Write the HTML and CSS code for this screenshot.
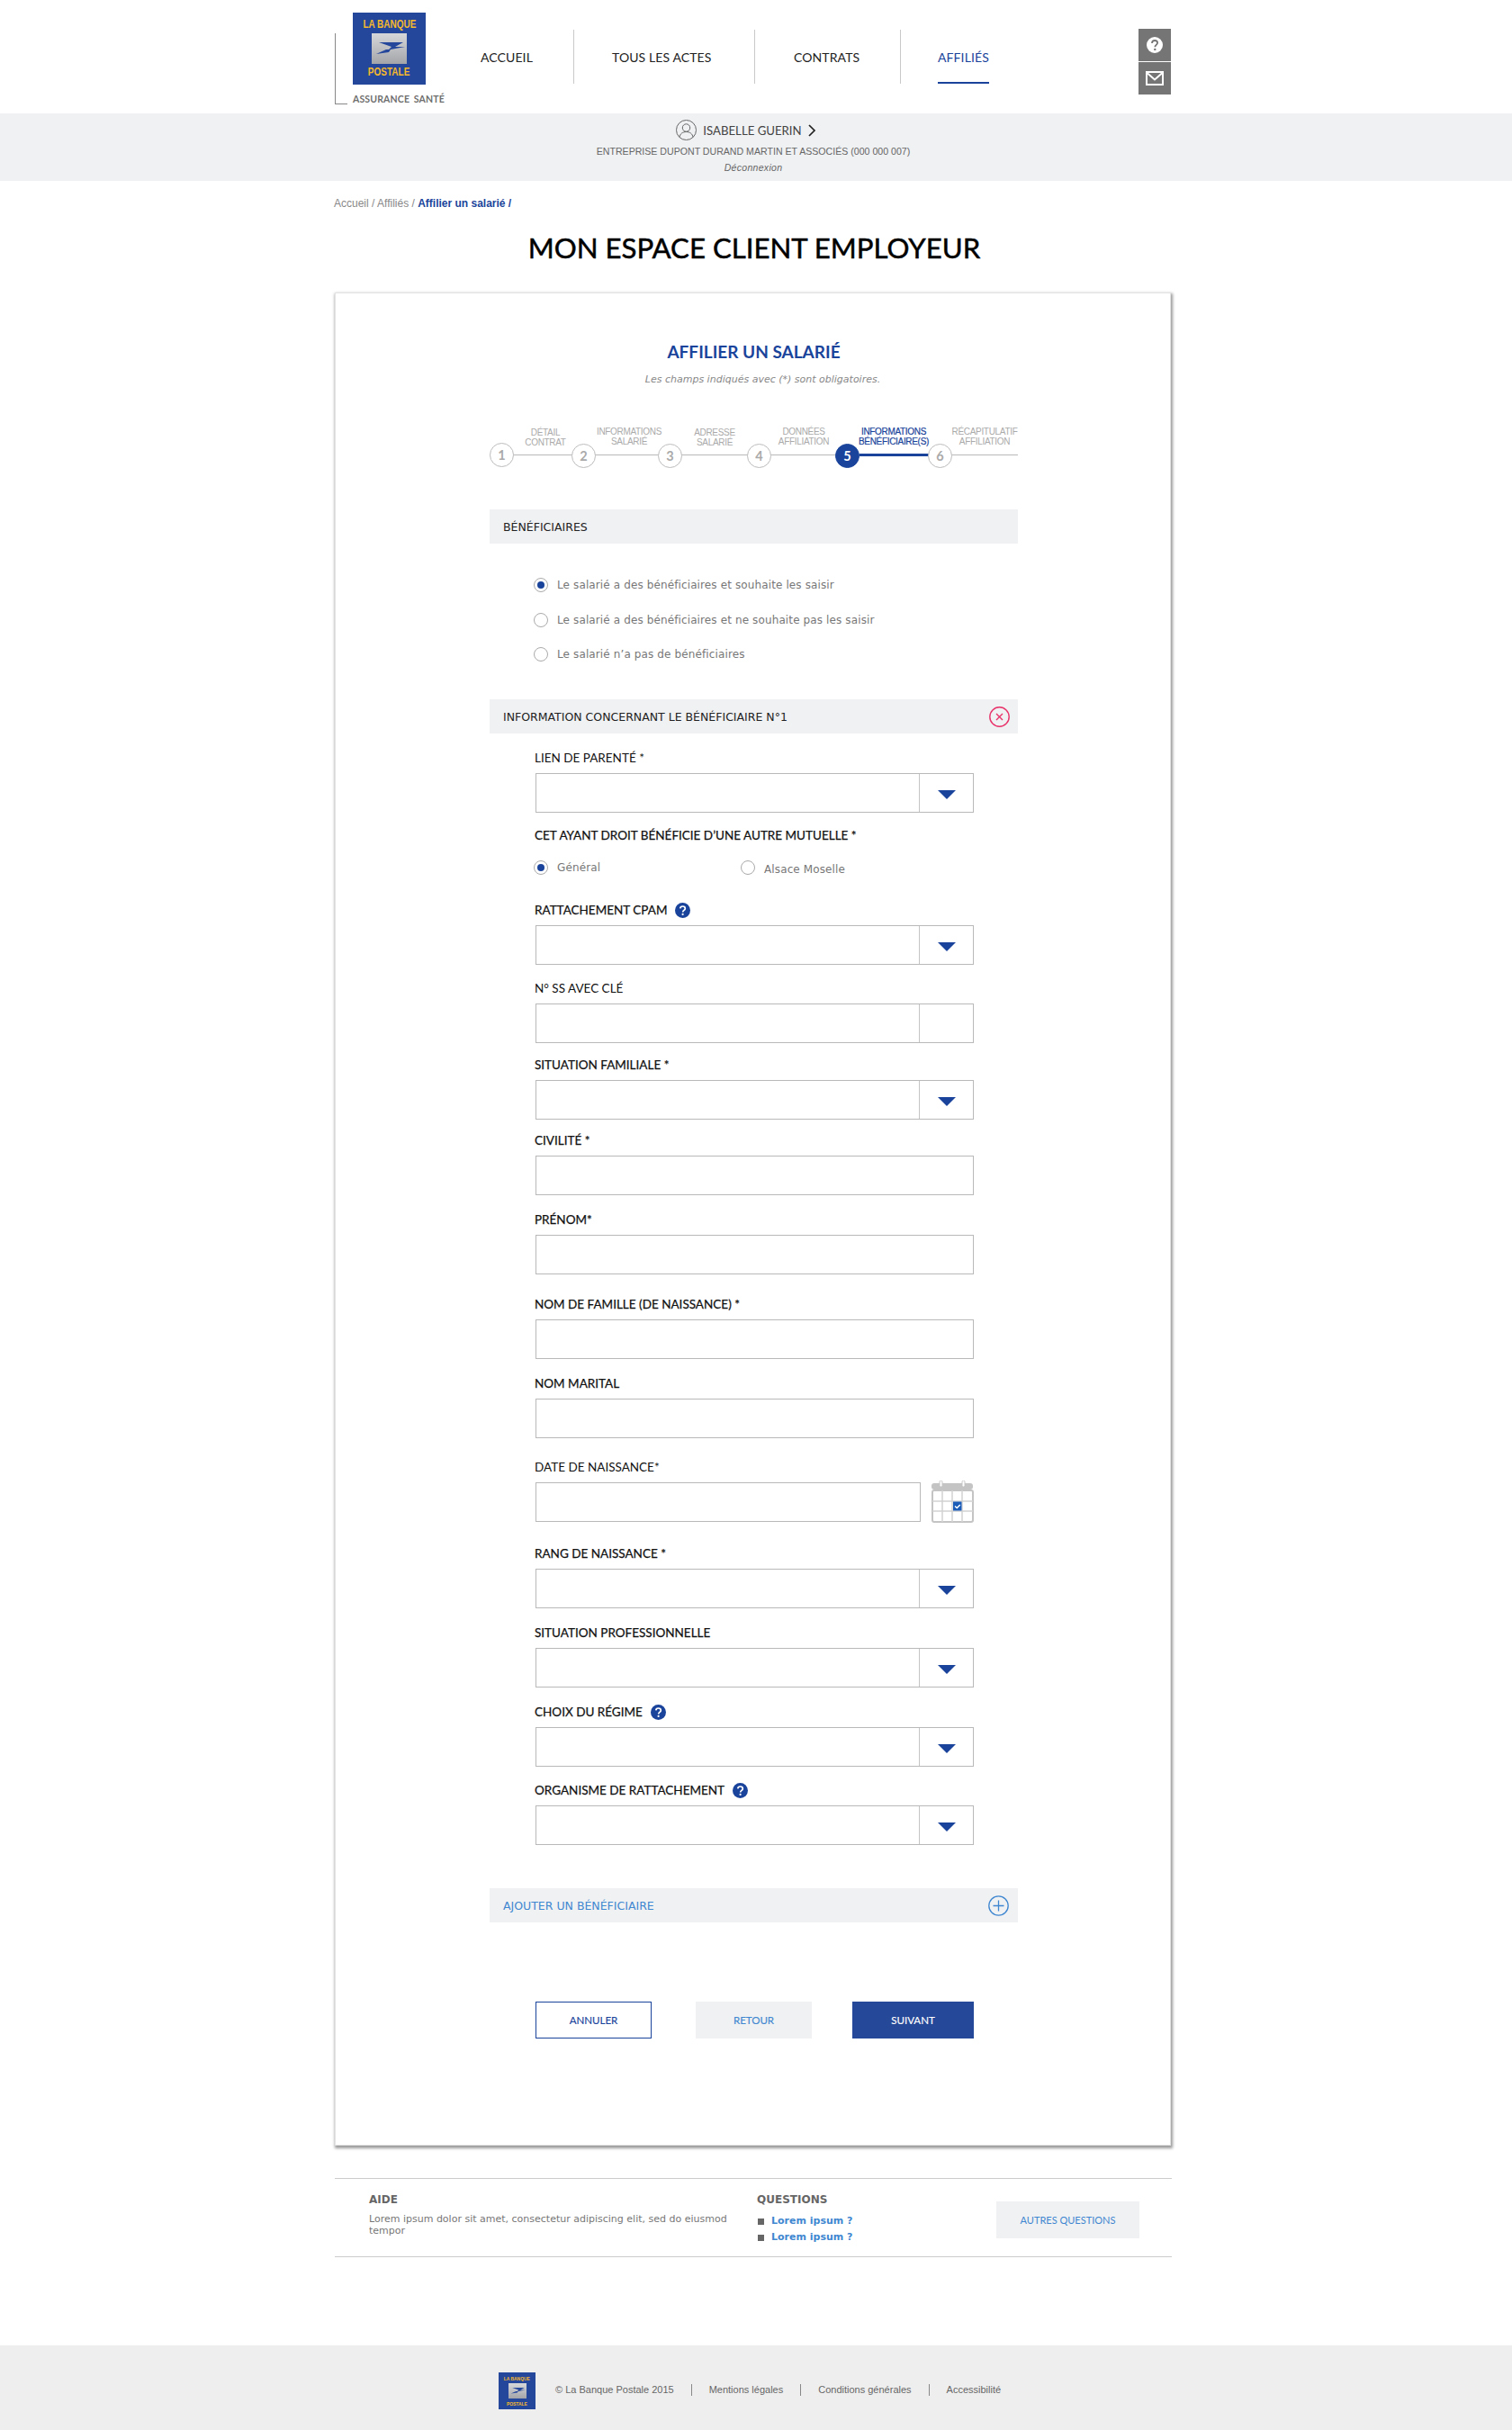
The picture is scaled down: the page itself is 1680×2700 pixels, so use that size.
FILE: index.html
```html
<!DOCTYPE html>
<html lang="fr">
<head>
<meta charset="utf-8">
<title>Mon espace client employeur</title>
<link rel="stylesheet" href="styles.css">
</head>
<body>
<svg class="defs" width="0" height="0" aria-hidden="true">
  <defs>
    <symbol id="caret" viewBox="0 0 20 10"><path d="M0 0H20L10 10Z" fill="#1a449b"/></symbol>
    <symbol id="help" viewBox="0 0 17 17"><circle cx="8.5" cy="8.5" r="8.5" fill="#1a449b"/><path d="M5.8 6.4C5.9 4.8 7 4 8.5 4c1.6 0 2.8 1 2.8 2.4 0 2-2.6 2-2.6 4" fill="none" stroke="#fff" stroke-width="1.7"/><circle cx="8.6" cy="12.9" r="1.1" fill="#fff"/></symbol>
    <symbol id="swoosh" viewBox="0 0 39 34"><path d="M8 10H35L26 15H37L21 18 19 21 5 23 16 18H19L22 15Z" fill="#25479b"/></symbol>
  </defs>
</svg>

<header class="top wrap">
  <div class="brand">
    <div class="logo">
      <span class="logo-word">LA BANQUE</span>
      <span class="logo-mark"><svg><use href="#swoosh"/></svg></span>
      <span class="logo-word">POSTALE</span>
    </div>
    <span class="brand-sub">ASSURANCE SANTÉ</span>
  </div>
  <nav class="nav">
    <a class="nav-item nav-accueil">ACCUEIL</a>
    <a class="nav-item nav-actes">TOUS LES ACTES</a>
    <a class="nav-item nav-contrats">CONTRATS</a>
    <a class="nav-item nav-affilies is-active"><span>AFFILIÉS</span></a>
  </nav>
  <div class="quick">
    <a class="quick-btn"><svg width="18" height="18" viewBox="0 0 18 18"><circle cx="9" cy="9" r="9" fill="#fff"/><path d="M6 7C6 5 7.4 4 9.1 4c1.8 0 3 1.1 3 2.6 0 2.2-2.8 2.3-2.800 4.600" fill="none" stroke="#757575" stroke-width="1.8"/><circle cx="9.300" cy="13.900" r="1.200" fill="#757575"/></svg></a>
    <a class="quick-btn"><svg width="20" height="16" viewBox="0 0 20 16"><rect x="1" y="1" width="18" height="14" fill="none" stroke="#fff" stroke-width="2"/><path d="M1.500 2 10 9.500 18.500 2" fill="none" stroke="#fff" stroke-width="2"/></svg></a>
  </div>
</header>

<section class="user-band">
  <div class="user-line">
    <svg width="23" height="23" viewBox="0 0 23 23"><circle cx="11.500" cy="11.500" r="11" fill="none" stroke="#666"/><circle cx="11.500" cy="9" r="4.200" fill="none" stroke="#666"/><path d="M4 19.500c.6-4 3.500-6 7.500-6s6.900 2 7.500 6" fill="none" stroke="#666"/></svg>
    <span class="user-name">ISABELLE GUERIN</span>
    <svg width="9" height="14" viewBox="0 0 9 14"><path d="M1 1l6 6-6 6" fill="none" stroke="#222" stroke-width="1.700"/></svg>
  </div>
  <p class="user-company">ENTREPRISE DUPONT DURAND MARTIN ET ASSOCIÉS (000 000 007)</p>
  <p class="user-logout">Déconnexion</p>
</section>

<main class="wrap">
  <p class="crumbs">Accueil / Affiliés / <strong>Affilier un salarié /</strong></p>
  <h1 class="page-title">MON ESPACE CLIENT EMPLOYEUR</h1>

  <article class="card">
    <h2 class="card-title">AFFILIER UN SALARIÉ</h2>
    <p class="card-note">Les champs indiqués avec (*) sont obligatoires.</p>

    <ol class="steps">
      <li class="step step-1"><span class="step-label">DÉTAIL<br>CONTRAT</span><b class="step-dot">1</b></li>
      <li class="step step-2"><span class="step-label">INFORMATIONS<br>SALARIÉ</span><b class="step-dot">2</b></li>
      <li class="step step-3"><span class="step-label">ADRESSE<br>SALARIÉ</span><b class="step-dot">3</b></li>
      <li class="step step-4"><span class="step-label">DONNÉES<br>AFFILIATION</span><b class="step-dot">4</b></li>
      <li class="step step-5 is-current"><span class="step-label">INFORMATIONS<br>BÉNÉFICIAIRE(S)</span><b class="step-dot">5</b></li>
      <li class="step step-6"><span class="step-label">RÉCAPITULATIF<br>AFFILIATION</span><b class="step-dot">6</b></li>
    </ol>

    <div class="bar bar-first"><span>BÉNÉFICIAIRES</span></div>

    <div class="choices">
      <label class="radio is-on"><i></i>Le salarié a des bénéficiaires et souhaite les saisir</label>
      <label class="radio"><i></i>Le salarié a des bénéficiaires et ne souhaite pas les saisir</label>
      <label class="radio"><i></i>Le salarié n’a pas de bénéficiaires</label>
    </div>

    <div class="bar bar-info">
      <span>INFORMATION CONCERNANT LE BÉNÉFICIAIRE N°1</span>
      <svg width="23" height="23" viewBox="0 0 23 23"><circle cx="11.500" cy="11.500" r="10.700" fill="none" stroke="#e8336b" stroke-width="1.400"/><path d="M8 8l7 7M15 8l-7 7" stroke="#e8336b" stroke-width="1.400"/></svg>
    </div>

    <div class="form">
      <div class="field f-first">
        <label class="lbl">LIEN DE PARENTÉ *</label>
        <div class="input has-side"><span class="side"><svg class="caret"><use href="#caret"/></svg></span></div>
      </div>
      <div class="mutuelle">
        <p class="lbl lbl-strong">CET AYANT DROIT BÉNÉFICIE D’UNE AUTRE MUTUELLE *</p>
        <div class="radio-row">
          <label class="radio is-on"><i></i>Général</label>
          <label class="radio radio-low"><i></i><span>Alsace Moselle</span></label>
        </div>
      </div>
      <div class="field f-cpam">
        <label class="lbl lbl-strong">RATTACHEMENT CPAM <svg class="help"><use href="#help"/></svg></label>
        <div class="input has-side"><span class="side"><svg class="caret"><use href="#caret"/></svg></span></div>
      </div>
      <div class="field f-17">
        <label class="lbl">N° SS AVEC CLÉ</label>
        <div class="input has-side"><span class="side"></span></div>
      </div>
      <div class="field f-15">
        <label class="lbl lbl-strong">SITUATION FAMILIALE *</label>
        <div class="input has-side"><span class="side"><svg class="caret"><use href="#caret"/></svg></span></div>
      </div>
      <div class="field f-14">
        <label class="lbl lbl-strong">CIVILITÉ *</label>
        <div class="input"></div>
      </div>
      <div class="field f-18">
        <label class="lbl lbl-strong">PRÉNOM*</label>
        <div class="input"></div>
      </div>
      <div class="field f-24">
        <label class="lbl lbl-strong">NOM DE FAMILLE (DE NAISSANCE) *</label>
        <div class="input"></div>
      </div>
      <div class="field f-18">
        <label class="lbl lbl-strong">NOM MARITAL</label>
        <div class="input"></div>
      </div>
      <div class="field f-23">
        <label class="lbl">DATE DE NAISSANCE*</label>
        <div class="date-row">
          <div class="input"></div>
          <svg class="calendar" viewBox="0 0 47 47" role="img" aria-label="Calendrier">
            <rect x="0" y="3" width="46" height="7" rx="3" fill="#c4c4c4"/>
            <rect x="9" y="0" width="3" height="7" rx="1.500" fill="#fff" stroke="#c4c4c4"/>
            <rect x="34" y="0" width="3" height="7" rx="1.500" fill="#fff" stroke="#c4c4c4"/>
            <rect x="1" y="11" width="45" height="35" rx="2" fill="#fff" stroke="#c4c4c4" stroke-width="2"/>
            <path d="M12 11V46M23 11V46M34 11V46M1 23H46M1 34H46" stroke="#d2d2d2" stroke-width="1.500"/>
            <rect x="24" y="23.500" width="9.500" height="10" fill="#1a5cb8"/>
            <path d="M26 28.500l2.300 2 3.500-3.500" fill="none" stroke="#fff" stroke-width="1.500"/>
          </svg>
        </div>
      </div>
      <div class="field f-26">
        <label class="lbl lbl-strong">RANG DE NAISSANCE *</label>
        <div class="input has-side"><span class="side"><svg class="caret"><use href="#caret"/></svg></span></div>
      </div>
      <div class="field f-18">
        <label class="lbl lbl-strong">SITUATION PROFESSIONNELLE</label>
        <div class="input has-side"><span class="side"><svg class="caret"><use href="#caret"/></svg></span></div>
      </div>
      <div class="field f-18">
        <label class="lbl lbl-strong">CHOIX DU RÉGIME <svg class="help"><use href="#help"/></svg></label>
        <div class="input has-side"><span class="side"><svg class="caret"><use href="#caret"/></svg></span></div>
      </div>
      <div class="field f-17">
        <label class="lbl lbl-strong">ORGANISME DE RATTACHEMENT <svg class="help"><use href="#help"/></svg></label>
        <div class="input has-side"><span class="side"><svg class="caret"><use href="#caret"/></svg></span></div>
      </div>
    </div>

    <div class="bar bar-add">
      <span>AJOUTER UN BÉNÉFICIAIRE</span>
      <svg width="23" height="23" viewBox="0 0 23 23"><circle cx="11.500" cy="11.500" r="10.700" fill="none" stroke="#3f87d0" stroke-width="1.300"/><path d="M11.500 5.500v12M5.500 11.500h12" stroke="#3f87d0" stroke-width="1.300"/></svg>
    </div>

    <div class="actions">
      <a class="btn btn-outline">ANNULER</a>
      <a class="btn btn-grey">RETOUR</a>
      <a class="btn btn-solid">SUIVANT</a>
    </div>
  </article>

  <section class="help-box">
    <div class="help-aide">
      <h3>AIDE</h3>
      <p>Lorem ipsum dolor sit amet, consectetur adipiscing elit, sed do eiusmod tempor</p>
    </div>
    <div class="help-q">
      <h3>QUESTIONS</h3>
      <ul>
        <li>Lorem ipsum ?</li>
        <li>Lorem ipsum ?</li>
      </ul>
    </div>
    <a class="help-more">AUTRES QUESTIONS</a>
  </section>
</main>

<footer class="foot">
  <div class="logo logo-small">
    <span class="logo-word">LA BANQUE</span>
    <span class="logo-mark"><svg><use href="#swoosh"/></svg></span>
    <span class="logo-word">POSTALE</span>
  </div>
  <span class="foot-item foot-copy">© La Banque Postale 2015</span>
  <span class="foot-item">Mentions légales</span>
  <span class="foot-item">Conditions générales</span>
  <span class="foot-item">Accessibilité</span>
</footer>
</body>
</html>
```

FILE: styles.css
```css
* { box-sizing: border-box; }
html, body { margin: 0; padding: 0; }
body { background: #fff; color: #222; font-family: "Lato", "Liberation Sans", sans-serif; }
p, h1, h2, h3, ul, ol { margin: 0; padding: 0; list-style: none; }
.defs { position: absolute; }
.wrap { margin-left: 372px; width: 930px; }

/* logo */
.logo { width: 81px; height: 80px; background: #25479b; display: flex; flex-direction: column; align-items: center; padding-top: 8px; }
.logo-word { font: bold 12.500px/11px "Liberation Sans", sans-serif; color: #f6b92b; white-space: nowrap; transform: scaleX(.8); }
.logo-mark { display: block; width: 39px; height: 34px; margin: 4px 0; background: linear-gradient(#d6d7d9, #a3a5a9); }
.logo-mark svg { display: block; width: 100%; height: 100%; }
.logo-small { flex: none; width: 41px; height: 41px; padding-top: 4px; }
.logo-small .logo-word { font-size: 6.200px; line-height: 6px; }
.logo-small .logo-mark { width: 20px; height: 17px; margin: 2px 0 3px; }

/* header */
.top { height: 126px; display: flex; }
.brand { width: 162px; height: 116px; padding-left: 20px; padding-top: 14px; position: relative; }
.brand::before { content: ""; position: absolute; left: 0; top: 37px; width: 13px; height: 78px; border-left: 1px solid #888; border-bottom: 1px solid #888; }
.brand-sub { display: block; margin-top: 10px; font: bold 10.500px/13px "Lato", sans-serif; color: #6f6f6f; white-space: nowrap; letter-spacing: .15px; word-spacing: 2px; }
.nav { display: flex; height: 60px; margin-top: 33px; }
.nav-item { display: flex; align-items: center; height: 60px; font-size: 14px; letter-spacing: .1px; color: #222; white-space: nowrap; border-right: 1px solid #c9c9c9; }
.nav-accueil { width: 104px; }
.nav-actes { width: 201px; padding-left: 42px; }
.nav-contrats { width: 162px; padding-left: 43px; }
.nav-affilies { width: 141px; border-right: 0; padding-left: 41px; color: #1a449b; }
.nav-affilies span { height: 60px; line-height: 61px; border-bottom: 2px solid #1a449b; }
.quick { margin-left: auto; margin-right: 1px; margin-top: 32px; display: flex; flex-direction: column; gap: 1px; }
.quick-btn { width: 36px; height: 36px; background: #757575; display: flex; align-items: center; justify-content: center; }

/* user band */
.user-band { height: 75px; background: #f0f1f3; display: flex; flex-direction: column; align-items: center; padding: 7px 6px 0 0; }
.user-line { display: flex; align-items: center; gap: 7px; height: 23px; margin-left: -16px; }
.user-name { font-size: 13.200px; color: #444; }
.user-company { margin-top: 4px; font: 10.600px/16px "Liberation Sans", sans-serif; color: #666; }
.user-logout { margin-top: 3px; font: italic 10.500px/14px "Liberation Sans", sans-serif; color: #666; letter-spacing: .3px; }

/* titles */
.crumbs { height: 14px; margin-top: 18px; margin-left: -1px; font: 12px/14px "Liberation Sans", sans-serif; color: #888; }
.crumbs strong { color: #1a449b; }
.page-title { margin-top: 22px; height: 40px; font-size: 31.200px; line-height: 40px; font-weight: 400; color: #000; text-align: center; width: 932px; -webkit-text-stroke: .5px #000; }

/* card */
.card { margin-top: 30px; width: 929px; height: 2059px; background: #fff; border: 1px solid #e3e3e3; box-shadow: 1px 2px 3px 1px rgba(0, 0, 0, .4); padding-left: 171px; padding-top: 53px; }
.card-title { width: 587px; text-align: center; font-size: 19px; line-height: 24px; color: #1a449b; font-weight: 700; }
.card-note { width: 587px; margin-top: 12px; padding-left: 20px; text-align: center; font: italic 11px/14px "DejaVu Sans", sans-serif; color: #888; }

/* stepper */
.steps { position: relative; width: 587px; height: 50px; margin-top: 37px; }
.steps::before { content: ""; position: absolute; left: 0; right: 0; top: 39px; height: 1px; background: #b9b9b9; }
.step { position: absolute; top: 0; width: 100px; }
.step-label { position: absolute; top: 8px; left: 0; width: 100px; text-align: center; font: 10px/11px "Liberation Sans", sans-serif; color: #aaa; letter-spacing: -.32px; white-space: nowrap; }
.step-dot { position: absolute; top: 27px; width: 27px; height: 27px; border-radius: 50%; border: 1px solid #bcbcbc; background: #fff; color: #aaa; font: bold 14.500px/25px "Lato", sans-serif; text-align: center; }
.step-1 { left: 11px; }  .step-1 .step-dot { left: -11px; top: 26px; } .step-1 .step-label { left: 1px; top: 9px; }
.step-2 { left: 105px; } .step-2 .step-dot { left: -14px; }
.step-3 { left: 200px; } .step-3 .step-dot { left: -13px; } .step-3 .step-label { top: 9px; }
.step-4 { left: 299px; } .step-4 .step-dot { left: -13px; }
.step-5 { left: 398px; } .step-5 .step-dot { left: -14px; background: #1a449b; border-color: #1a449b; color: #fff; } .step-5 .step-label { left: 1px; color: #1a449b; -webkit-text-stroke: .2px #1a449b; }
.step-5::after { content: ""; position: absolute; left: 13px; top: 38px; width: 85px; height: 3px; background: #1a449b; }
.step-6 { left: 500px; } .step-6 .step-dot { left: -13px; }

/* bars */
.bar { width: 587px; height: 38px; background: #f0f1f3; display: flex; align-items: center; justify-content: space-between; padding: 0 9px 0 15px; font: 12.500px/38px "DejaVu Sans", sans-serif; color: #222; }
.bar span { padding-top: 2px; }
.bar-first { margin-top: 50px; }
.bar-info { margin-top: 41px; }
.bar-add { margin-top: 48px; color: #3f87d0; padding-right: 10px; }

/* radios */
.choices { margin-top: 37px; padding-left: 49px; display: flex; flex-direction: column; gap: 20.500px; }
.radio { display: flex; align-items: center; gap: 10px; height: 18px; font: 12px/18px "DejaVu Sans", sans-serif; color: #777; white-space: nowrap; letter-spacing: .12px; }
.radio i { width: 16px; height: 16px; border-radius: 50%; border: 1px solid #aaa; background: #fff; flex: none; display: flex; align-items: center; justify-content: center; }
.radio.is-on i::after { content: ""; width: 8px; height: 8px; border-radius: 50%; background: #1a449b; }
.radio-low span { padding-top: 4px; }

/* form */
.form { padding-left: 51px; width: 587px; }
.lbl { display: flex; align-items: center; height: 18px; margin-bottom: 8px; margin-left: -1px; font-size: 13.500px; line-height: 18px; color: #111; white-space: nowrap; }
.lbl-strong { -webkit-text-stroke: .25px #111; }
.help { width: 17px; height: 17px; margin-left: 9px; }
.input { width: 487px; height: 44px; border: 1px solid #b9b9b9; background: #fff; position: relative; flex: none; }
.has-side .side { position: absolute; right: 0; top: 0; bottom: 0; width: 60px; border-left: 1px solid #c4c4c4; display: flex; align-items: center; justify-content: center; padding-top: 3px; }
.caret { width: 20px; height: 10px; }
.field { width: 487px; }
.f-first { margin-top: 18px; }
.f-14 { margin-top: 14px; }
.f-15 { margin-top: 15px; }
.f-17 { margin-top: 17px; }
.f-18 { margin-top: 18px; }
.f-23 { margin-top: 23px; }
.f-24 { margin-top: 24px; }
.f-26 { margin-top: 26px; }
.mutuelle { height: 99px; padding-top: 16px; }
.mutuelle .lbl { margin-bottom: 0; }
.radio-row { display: flex; margin-top: 18px; margin-left: -2px; }
.radio-row .radio:first-child { width: 230px; }
.date-row { display: flex; align-items: flex-start; justify-content: space-between; height: 44px; }
.date-row .input { width: 428px; }
.calendar { width: 47px; height: 47px; margin-top: -2px; flex: none; }

/* actions */
.actions { margin-top: 88px; padding-left: 51px; display: flex; width: 587px; }
.btn { height: 41px; display: flex; align-items: center; justify-content: center; font-size: 11.500px; -webkit-text-stroke: .15px currentColor; }
.btn-outline { width: 129px; border: 1px solid #1a449b; color: #1a449b; }
.btn-grey { width: 129px; margin-left: 49px; background: #f0f1f3; color: #3f87d0; }
.btn-solid { width: 135px; margin-left: 45px; background: #254899; color: #fff; }

/* help */
.help-box { margin-top: 36px; width: 930px; height: 88px; border-top: 1px solid #ccc; border-bottom: 1px solid #ccc; display: flex; }
.help-box h3 { font: bold 12px/14px "DejaVu Sans", sans-serif; color: #666; }
.help-aide { margin-left: 38px; width: 431px; padding-top: 16px; }
.help-aide p { margin-top: 8px; width: 405px; font: 11px/13px "DejaVu Sans", sans-serif; color: #777; }
.help-q { padding-top: 16px; width: 266px; }
.help-q ul { margin-top: 8px; }
.help-q li { position: relative; padding-left: 16px; font: bold 11px/18px "DejaVu Sans", sans-serif; color: #3f87d0; }
.help-q li::before { content: ""; position: absolute; left: 1px; top: 6px; width: 7px; height: 7px; background: #666; }
.help-more { width: 159px; height: 41px; margin-top: 25px; background: #f0f1f3; color: #3f87d0; font-size: 11px; padding-bottom: 1px; display: flex; align-items: center; justify-content: center; }

/* footer */
.foot { margin-top: 98px; height: 94px; background: #eee; display: flex; align-items: flex-start; padding-left: 554px; padding-top: 30px; }
.foot-item { margin-top: 13px; height: 13px; font: 11px/13px "Liberation Sans", sans-serif; color: #666; padding: 0 19px; border-left: 1px solid #888; white-space: nowrap; }
.foot-copy { margin-left: 3px; border-left: 0; }
```
